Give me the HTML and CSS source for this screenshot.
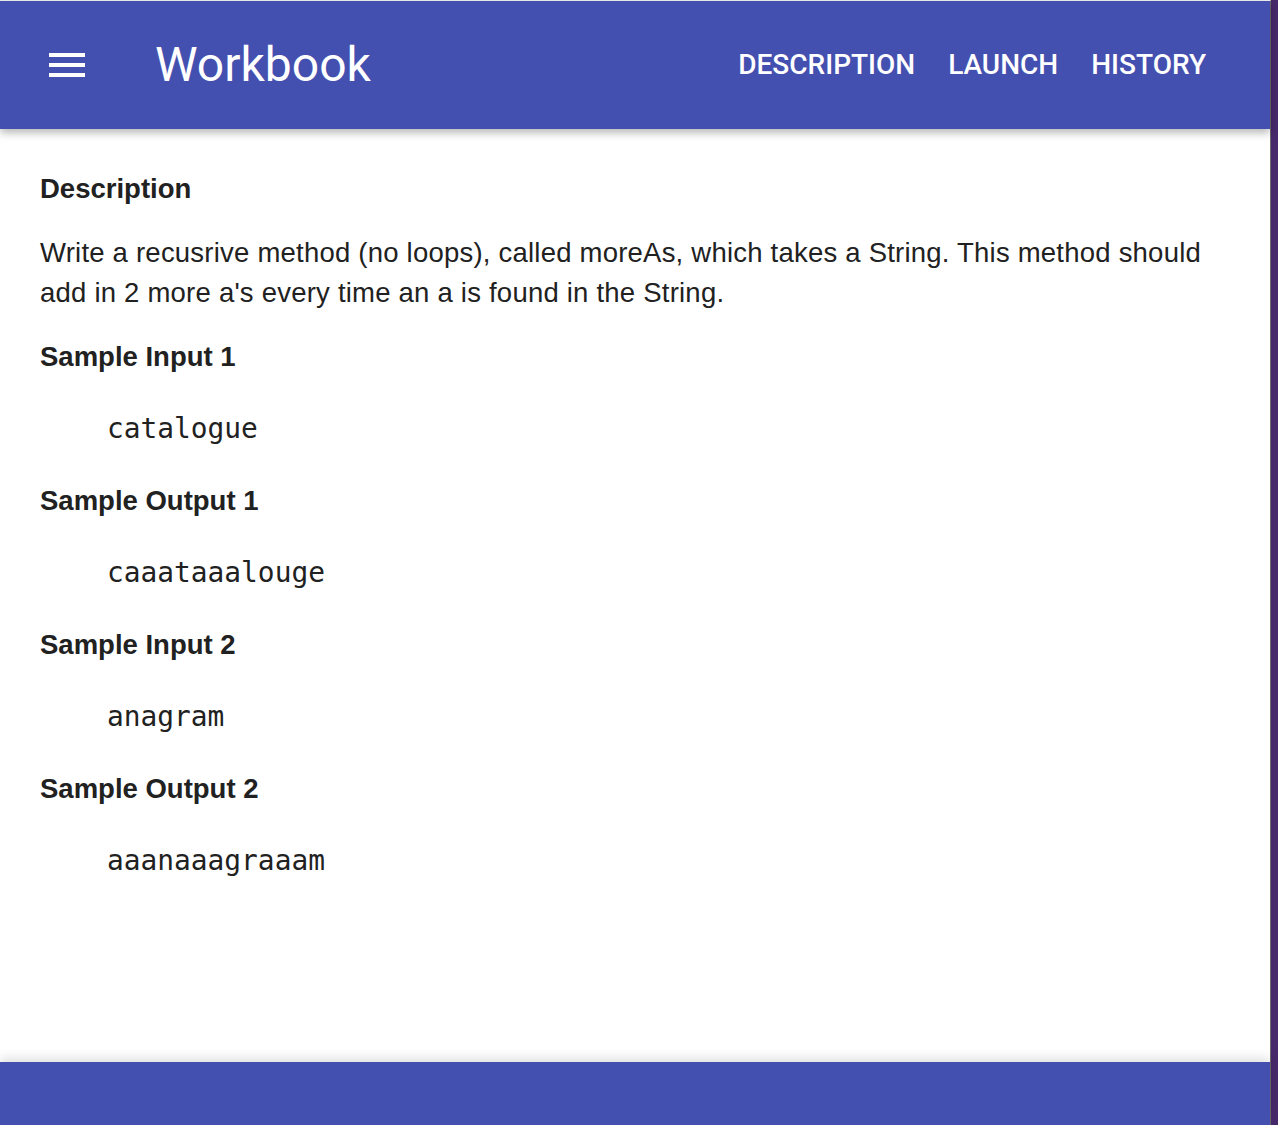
FILE: index.html
```html
<!DOCTYPE html>
<html lang="en">
<head>
<meta charset="utf-8">
<title>Workbook</title>
<link rel="stylesheet" href="styles.css">
</head>
<body>
<div class="app">
  <header class="toolbar">
    <button class="menu-btn" aria-label="Menu">
      <svg width="48" height="48" viewBox="0 0 24 24"><path fill="#fff" d="M3 18h18v-2H3v2zm0-5h18v-2H3v2zm0-7v2h18V6H3z"/></svg>
    </button>
    <div class="title">Workbook</div>
    <nav class="nav">
      <a class="nav-link">DESCRIPTION</a>
      <a class="nav-link">LAUNCH</a>
      <a class="nav-link">HISTORY</a>
    </nav>
  </header>
  <main class="content">
    <h3 class="section-title">Description</h3>
    <p class="desc">Write a recusrive method (no loops), called moreAs, which takes a String. This method should add in 2 more a's every time an a is found in the String.</p>
    <h3 class="sample-title">Sample Input 1</h3>
    <pre class="code">catalogue</pre>
    <h3 class="sample-title">Sample Output 1</h3>
    <pre class="code">caaataaalouge</pre>
    <h3 class="sample-title">Sample Input 2</h3>
    <pre class="code">anagram</pre>
    <h3 class="sample-title">Sample Output 2</h3>
    <pre class="code">aaanaaagraaam</pre>
  </main>
  <footer class="footer"></footer>
</div>
</body>
</html>
```

FILE: styles.css
```css
html, body {
  margin: 0;
  padding: 0;
  height: 100%;
}
body {
  background: #46296a;
  overflow: hidden;
}
.app {
  width: 1271px;
  height: 1125px;
  box-sizing: border-box;
  border-right: 1px solid #6a6a6a;
  border-top: 1px solid #f0f0f0;
  background: #fff;
  display: flex;
  flex-direction: column;
  font-family: "Liberation Sans", Arial, sans-serif;
  color: #212121;
}
.toolbar {
  height: 128px;
  flex: none;
  background: #4450b0;
  display: flex;
  align-items: center;
  padding: 0 64px 2px 43px;
  box-sizing: border-box;
  box-shadow: 0 4px 8px rgba(0,0,0,0.28);
  position: relative;
  z-index: 2;
}
.menu-btn {
  width: 48px;
  height: 48px;
  padding: 0;
  border: 0;
  background: transparent;
  display: block;
  margin-top: 2px;
}
.menu-btn svg { display: block; }
.title {
  margin-left: 64px;
  font-family: Roboto, sans-serif;
  font-size: 48px;
  color: #fff;
  flex: 1;
}
.nav {
  display: flex;
  gap: 33px;
}
.nav-link {
  font-family: Roboto, sans-serif;
  font-weight: 500;
  font-size: 28px;
  color: #fff;
}
.content {
  flex: 1;
  padding: 40px 40px 0 40px;
  font-size: 27.5px;
  line-height: 40px;
}
.section-title,
.sample-title {
  margin: 0;
  font-size: 27.5px;
  line-height: 40px;
  font-weight: bold;
}
.section-title { margin-bottom: 24px; }
.desc {
  margin: 0 0 24px;
  letter-spacing: 0.22px;
}
.code {
  margin: 32px 0 32px 67px;
  font-family: "DejaVu Sans Mono", monospace;
  font-size: 27.85px;
  line-height: 40px;
}
.footer {
  height: 63px;
  flex: none;
  background: #4450b0;
  box-shadow: 0 -4px 10px rgba(0,0,0,0.12);
}
```
